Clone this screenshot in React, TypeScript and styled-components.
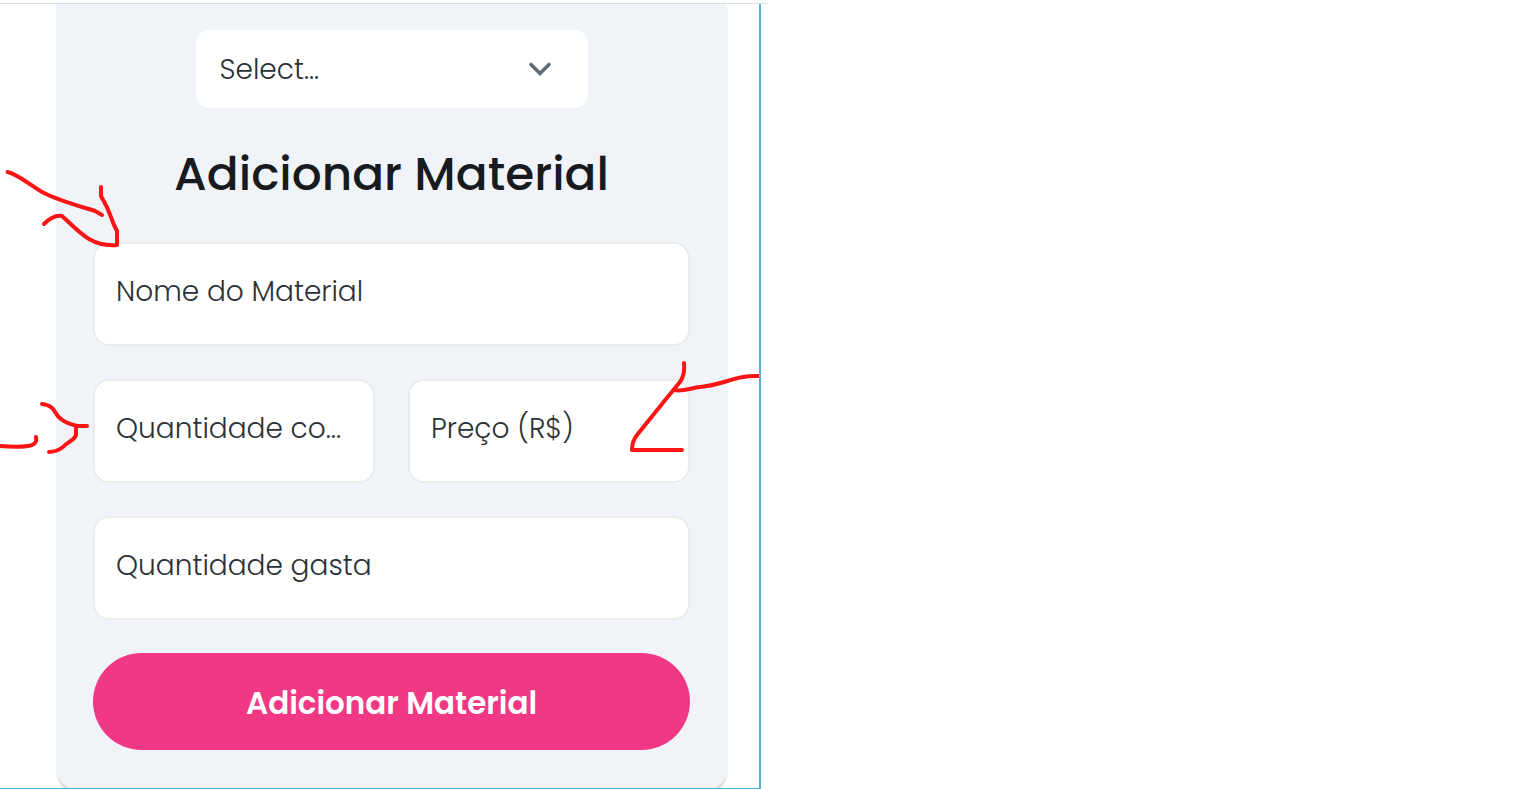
import React from "react";
import styled, { createGlobalStyle } from "styled-components";

const GlobalStyle = createGlobalStyle`
  *, *::before, *::after { box-sizing: border-box; }
  body {
    margin: 0;
    background: #fff;
    color: #171b20;
    font-family: Poppins, Inter, "Open Sans", sans-serif;
  }
`;

const Page = styled.main`
  padding-top: 3px;
`;

const Column = styled.div`
  width: 50%;
  border-top: 1px solid #d9dfe3;
`;

const Frame = styled.section`
  position: relative;
  overflow: hidden;
  margin-right: 7px;
  padding: 0 31px 0 56px;
  border-right: 2px solid #56b1dc;
  border-bottom: 1px solid #3fb4e8;
`;

const Card = styled.form`
  display: flex;
  flex-direction: column;
  align-items: center;
  margin-bottom: -3px;
  padding: 26px 38px 41px 37px;
  border-radius: 2px 6px 24px 24px;
  background: #f0f4f9;
  box-shadow: 0 4px 2px -1px rgba(0, 0, 0, 0.2);
`;

const SelectBox = styled.div`
  position: relative;
  width: 392px;
  max-width: 100%;
`;

const Select = styled.select`
  appearance: none;
  display: block;
  width: 100%;
  height: 78px;
  padding: 2px 72px 0 24px;
  border: 0;
  border-radius: 14px;
  background: #fff;
  color: #2c3136;
  font: 300 28px/40px Poppins, Inter, "Open Sans", sans-serif;
`;

const Chevron = styled.svg`
  position: absolute;
  top: 27px;
  right: 36px;
  width: 24px;
  height: 24px;
  pointer-events: none;
`;

const Title = styled.h1`
  margin: 31px 0 33px;
  font-size: 47px;
  line-height: 70px;
  font-weight: 500;
  text-align: center;
`;

const Fields = styled.div`
  display: grid;
  grid-template-columns: 1fr 1fr;
  gap: 33px;
  width: 100%;
`;

const Field = styled.input<{ $wide?: boolean }>`
  grid-column: ${(p) => (p.$wide ? "1 / -1" : "auto")};
  width: 100%;
  min-width: 0;
  height: 104px;
  padding: 0 21px 4px;
  border: 2px solid #ebebeb;
  border-radius: 16px;
  background: #fff;
  color: #2c3136;
  font: 300 28px/40px Poppins, Inter, "Open Sans", sans-serif;

  &::placeholder {
    color: #2c3136;
    opacity: 1;
  }
`;

const Submit = styled.button`
  grid-column: 1 / -1;
  height: 97px;
  padding: 3px 0 0;
  border: 0;
  border-radius: 49px;
  background: #f13884;
  color: #fff;
  font: 600 31px/44px Poppins, Inter, "Open Sans", sans-serif;
  cursor: pointer;
`;

const Marks = styled.svg`
  position: absolute;
  top: -4px;
  left: 0;
  width: 759px;
  height: 789px;
  pointer-events: none;
`;

export default function App() {
  return (
    <Page>
      <GlobalStyle />
      <Column>
        <Frame>
          <Card onSubmit={(e) => e.preventDefault()}>
            <SelectBox>
              <Select aria-label="Material" defaultValue="">
                <option value="">Select...</option>
              </Select>
              <Chevron viewBox="0 0 24 24" fill="none" stroke="#5f6c75" strokeWidth="3.6" strokeLinecap="round" strokeLinejoin="miter" aria-hidden="true">
                <path d="M3 7.5 12 16.5 21 7.5" />
              </Chevron>
            </SelectBox>
            <Title>Adicionar Material</Title>
            <Fields>
              <Field $wide aria-label="Nome do Material" placeholder="Nome do Material" />
              <Field aria-label="Quantidade" placeholder="Quantidade co..." />
              <Field aria-label="Preço (R$)" placeholder="Preço (R$)" />
              <Field $wide aria-label="Quantidade gasta" placeholder="Quantidade gasta" />
              <Submit type="submit">Adicionar Material</Submit>
            </Fields>
          </Card>
          <Marks viewBox="0 0 759 789" fill="none" stroke="#fb1414" strokeWidth="4" strokeLinecap="round" strokeLinejoin="round" aria-hidden="true">
            <path d="M7.500 172C17 174 29 184 42 192C59 201 86 208 95 211L102 215" />
            <path d="M101 187V196C104 202 107 206 109 212L114 225L117 231V245C106 246 96 243 89 239C79 233 70 223 62 216C56 215 49 219 44 224" />
            <path d="M42 404C57 406 53 414 61 419C67 424 73 425 78 426H87" />
            <path d="M76 426V435C74 441 67 442 63 447C59 450 54 452 49 452" />
            <path d="M0 446C10 447 21 447 28 446C35 445 37 442 36 437" />
            <path d="M684 363C685 371 684 376 680 382L666 399L637 435C633 440 632 444 632 450H682" />
            <path d="M674 390C682 392 691 388 700 387C724 385 735 375 759 376" />
          </Marks>
        </Frame>
      </Column>
    </Page>
  );
}
